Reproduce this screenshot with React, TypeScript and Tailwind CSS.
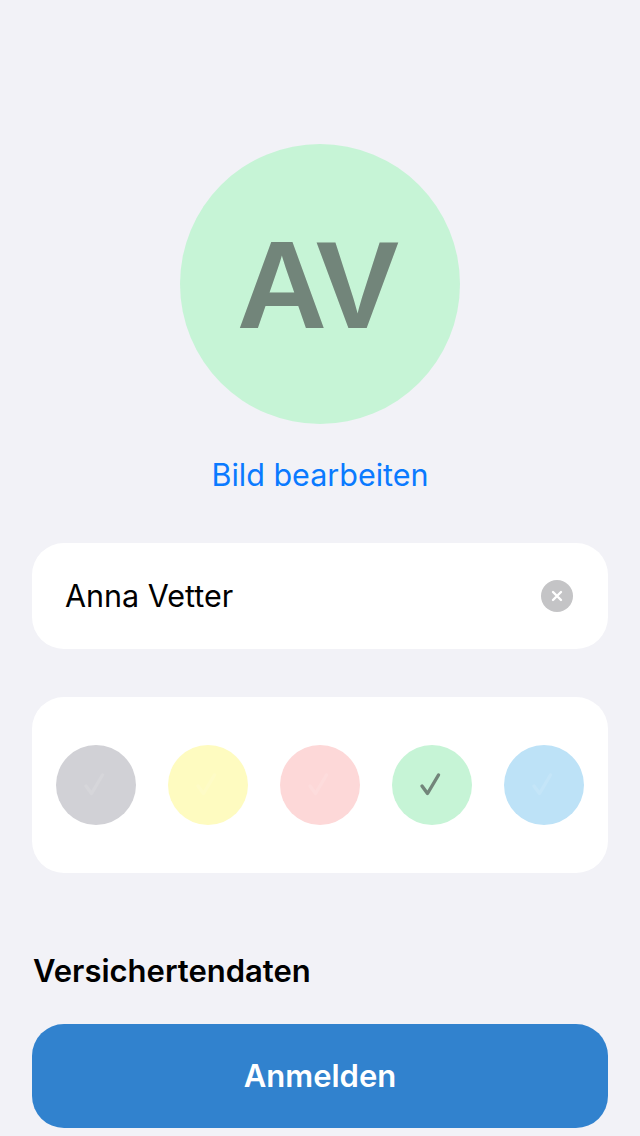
import { useState } from 'react';

const COLORS = ['#d1d1d6', '#fefbc0', '#fdd8d8', '#c6f4d6', '#bde2f7'];

function Check({ className }: { className?: string }) {
  return (
    <svg viewBox="0 0 32 32" width="32" height="32" className={className} fill="none">
      <path
        d="M6 17 L11.5 24.5 L22.5 6"
        stroke="currentColor"
        strokeWidth="3.4"
        strokeLinecap="round"
        strokeLinejoin="round"
      />
    </svg>
  );
}

export default function App() {
  const [name, setName] = useState('Anna Vetter');
  const [selected, setSelected] = useState(3);

  return (
    <div
      className="min-h-[1136px] bg-[#f2f2f7] px-8 pt-[144px] flex flex-col"
      style={{ fontFamily: 'Inter, "Noto Sans", sans-serif' }}
    >
      <div className="flex flex-col items-center">
        <div
          className="w-[280px] h-[280px] rounded-full flex items-center justify-center"
          style={{ backgroundColor: COLORS[selected] }}
        >
          <span
            className="text-[125px] font-bold text-[#72857a] leading-none tracking-[-2px] pr-[6px]"
            style={{ fontFamily: '"Liberation Sans", Arial, sans-serif' }}
          >
            AV
          </span>
        </div>
        <button className="mt-[33px] text-[30.5px] leading-[36px] text-[#0a7aff]">Bild bearbeiten</button>
      </div>

      <div className="mt-[50px] h-[106px] bg-white rounded-[32px] flex items-center pl-[33px] pr-[35px]">
        <input
          value={name}
          onChange={(e) => setName(e.target.value)}
          className="flex-1 min-w-0 text-[30.5px] text-black outline-none bg-transparent"
        />
        <button
          onClick={() => setName('')}
          className="shrink-0 w-8 h-8 rounded-full bg-[#c4c4c6] flex items-center justify-center"
        >
          <svg viewBox="0 0 16 16" width="16" height="16">
            <path d="M4 4 L12 12 M12 4 L4 12" stroke="white" strokeWidth="2.4" strokeLinecap="round" />
          </svg>
        </button>
      </div>

      <div className="mt-12 h-[176px] bg-white rounded-[32px] px-6 flex items-center justify-between">
        {COLORS.map((c, i) => (
          <button
            key={c}
            onClick={() => setSelected(i)}
            className="w-20 h-20 rounded-full flex items-center justify-center"
            style={{ backgroundColor: c }}
          >
            <Check className={i === selected ? 'text-[#72857a]' : 'text-white/10'} />
          </button>
        ))}
      </div>

      <h2 className="mt-[80px] text-[31px] leading-[36px] font-semibold text-black pl-px">Versichertendaten</h2>

      <button className="mt-[35px] h-[104px] rounded-[32px] bg-[#3182ce] text-white text-[31px] font-semibold">
        Anmelden
      </button>
    </div>
  );
}
